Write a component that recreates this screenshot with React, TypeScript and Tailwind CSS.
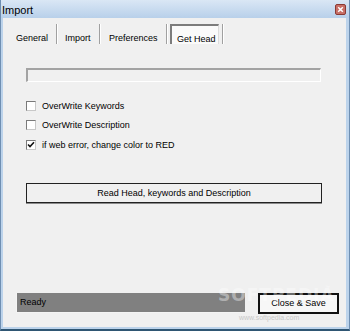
import React from "react";

const font = { fontFamily: '"Liberation Sans", Arial, sans-serif' };

function Check({ checked }: { checked?: boolean }) {
  return (
    <div className="w-[10px] h-[10px] bg-white border border-t-[#7a7a7a] border-l-[#7a7a7a] border-b-[#c8c8c8] border-r-[#c8c8c8] flex items-center justify-center">
      {checked && (
        <svg width="8" height="8" viewBox="0 0 8 8">
          <path d="M1 3.5 L3 5.5 L7 1.2" stroke="#111" strokeWidth="1.6" fill="none" />
        </svg>
      )}
    </div>
  );
}

function Sep() {
  return <div className="w-[2px] h-[20px] border-l border-l-[#a0a0a0] border-r border-r-white" />;
}

export default function App() {
  return (
    <div
      className="relative w-[350px] h-[331px] bg-[#bcd3eb] flex flex-col border-l border-r border-l-[#6f8fb2] border-r-[#6f8fb2] border-b-2 border-b-[#2f5673] text-black overflow-hidden"
      style={font}
    >
      {/* Title bar */}
      <div className="h-[18px] flex items-center justify-between pl-[1px] pr-[3px] bg-gradient-to-b from-[#dae7f5] to-[#b8d0ea]">
        <span className="text-[11px] leading-[12px] pt-[2px]">Import</span>
        <div className="w-[11px] h-[11px] rounded-[2px] bg-[#c86f66] border border-[#8a3a34] flex items-center justify-center">
          <svg width="7" height="7" viewBox="0 0 7 7">
            <path d="M1.2 1.2 L5.8 5.8 M5.8 1.2 L1.2 5.8" stroke="white" strokeWidth="1.5" />
          </svg>
        </div>
      </div>

      {/* Content */}
      <div className="flex-1 pl-[2px] pr-[3px] pb-[2px] flex">
        <div className="flex-1 bg-[#f0f0f0] flex flex-col text-[9px]">
          {/* Tabs */}
          <div className="flex mt-[6px] h-[20px] pl-[13px]">
            <div className="w-[40px] pt-[8px] leading-[12px]">General</div>
            <Sep />
            <div className="w-[41px] pl-[7px] pt-[8px] leading-[12px]">Import</div>
            <Sep />
            <div className="w-[65px] pl-[8px] pt-[8px] leading-[12px]">Preferences</div>
            <Sep />
            <div className="ml-[2px] w-[49px] h-[20px] bg-[#fafafa] border-t-2 border-l-2 border-[#7c7c7c] border-r border-r-[#dcdcdc] pl-[5px] pt-[7px] leading-[12px]">
              Get Head
            </div>
            <div className="ml-[3px]">
              <Sep />
            </div>
          </div>

          {/* Sunken field */}
          <div className="ml-[23px] mt-[24px] w-[295px] h-[14px] border-t-2 border-l-2 border-[#a3a3a3] border-b border-r border-b-white border-r-white bg-[#f0f0f0]" />

          {/* Checkboxes */}
          <div className="mt-[14px] ml-[23px] flex flex-col">
            {[
              { label: "OverWrite Keywords", checked: false },
              { label: "OverWrite Description", checked: false },
              { label: "if web error, change color to RED", checked: true },
            ].map((r) => (
              <div key={r.label} className="h-[19.5px] flex items-center gap-[6px]">
                <Check checked={r.checked} />
                <span className="leading-[12px]">{r.label}</span>
              </div>
            ))}
          </div>

          {/* Big button */}
          <div className="ml-[23px] mt-[28px] w-[296px] h-[20px] border border-[#222] shadow-[0_1px_0_#8a8a8a] bg-[#f0f0f0] flex items-center justify-center leading-[12px]">
            Read Head, keywords and Description
          </div>

          {/* Bottom row */}
          <div className="mt-[90px] flex ml-[13px] items-start">
            <div className="w-[229px] h-[20px] bg-[#808080] border-l border-b border-[#f4f4f4] pl-[3px] pt-[3px] leading-[12px]">
              Ready
            </div>
            <div className="ml-[13px] w-[81px] h-[21px] border-2 border-[#111] bg-[#f7f7f7] flex items-center justify-center leading-[12px]">
              Close &amp; Save
            </div>
          </div>
        </div>
      </div>

      {/* Watermark overlay */}
      <div className="absolute left-[217px] top-[286px] text-[17px] leading-[18px] font-bold tracking-[1px] text-white/40 pointer-events-none" style={{ fontFamily: '"DejaVu Sans", sans-serif' }}>
        SOFTPEDIA
      </div>
      <div className="absolute left-[324px] top-[284px] text-[5px] text-white/60 pointer-events-none">™</div>
      <div className="absolute left-[238px] top-[314px] text-[7px] leading-[8px] text-[#c9c9c9] pointer-events-none">
        www.softpedia.com
      </div>
    </div>
  );
}
